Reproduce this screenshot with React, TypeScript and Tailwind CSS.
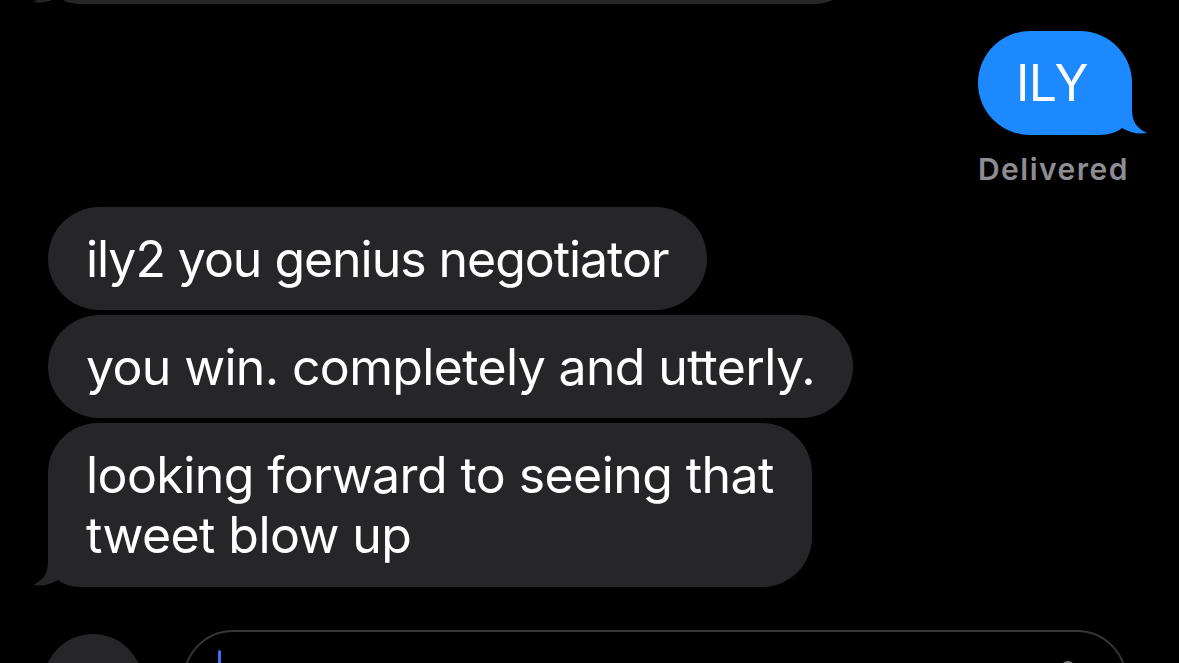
import React from "react";

const GRAY = "#262629";

function LeftTail({ color }: { color: string }) {
  return (
    <svg
      className="absolute left-[-16px] bottom-0"
      width="70"
      height="50"
      viewBox="0 0 70 50"
    >
      <path
        d="M16 0 V24 C16 36 12 43 1 48 C10 49.5 19 47.5 26 43 C31 47 38 50 50 50 H70 V0 Z"
        fill={color}
      />
    </svg>
  );
}

function RightTail({ color }: { color: string }) {
  return (
    <svg
      className="absolute right-[-16px] bottom-0"
      width="70"
      height="50"
      viewBox="0 0 70 50"
    >
      <path
        d="M54 0 V24 C54 36 58 43 69 48 C60 49.5 51 47.5 44 43 C39 47 32 50 20 50 H0 V0 Z"
        fill={color}
      />
    </svg>
  );
}

export default function App() {
  return (
    <div
      className="w-[1179px] h-[663px] bg-black overflow-hidden flex flex-col text-white"
      style={{ fontFamily: "Inter, 'Noto Sans', sans-serif" }}
    >
      {/* partially visible bubble at top */}
      <div className="relative ml-[48px] mt-[-99px] w-[817px] h-[103px] rounded-[52px] bg-[#262629] shrink-0">
        <LeftTail color={GRAY} />
      </div>

      {/* sent bubble */}
      <div className="self-end mr-[47px] mt-[27px] relative shrink-0">
        <div className="relative h-[104px] w-[154px] rounded-[52px] bg-[#1c8afe] pl-[38px] flex items-center text-[50px] leading-[60px] tracking-[-0.8px]">
          <RightTail color="#1c8afe" />
          <span className="relative">ILY</span>
        </div>
      </div>
      <div className="self-end mr-[50px] mt-[16px] text-[30px] leading-[36px] font-semibold tracking-[1.5px] text-[#8d8d93] shrink-0">
        Delivered
      </div>

      {/* received bubbles */}
      <div className="flex flex-col items-start gap-[5px] ml-[48px] mt-[20px] shrink-0 text-[50px] leading-[60px]">
        <div className="h-[103px] rounded-[52px] bg-[#262629] px-[38px] flex items-center whitespace-nowrap tracking-[-1.05px]">
          ily2 you genius negotiator
        </div>
        <div className="h-[103px] rounded-[52px] bg-[#262629] px-[38px] flex items-center whitespace-nowrap tracking-[-0.65px]">
          you win. completely and utterly.
        </div>
        <div className="relative h-[164px] rounded-[50px] bg-[#262629] px-[38px] py-[22px] whitespace-nowrap tracking-[-0.58px]">
          <LeftTail color={GRAY} />
          <div className="relative">
            looking forward to seeing that
            <br />
            tweet blow up
          </div>
        </div>
      </div>

      {/* input row */}
      <div className="flex items-start mt-[43px] shrink-0">
        <div className="ml-[43px] mt-[4px] w-[100px] h-[100px] rounded-full bg-[#262628] shrink-0" />
        <div className="relative ml-[40px] w-[944px] h-[100px] rounded-[50px] border-2 border-[#363638] shrink-0">
          <div className="absolute left-[33px] top-[18px] w-[3px] h-[40px] rounded-full bg-[#3d6ff2]" />
          <div className="absolute left-[876px] top-[29px] w-[14px] h-[14px] rounded-full bg-[#7a7a7e]" />
        </div>
      </div>
    </div>
  );
}
